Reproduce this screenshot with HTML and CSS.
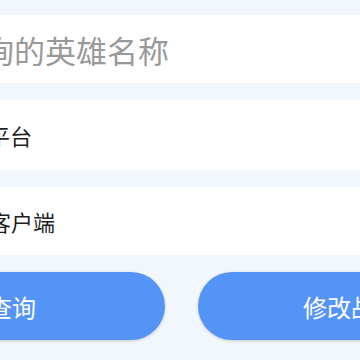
FILE: index.html
```html
<!DOCTYPE html>
<html lang="zh">
<head>
<meta charset="utf-8">
<link rel="stylesheet" href="styles.css">
</head>
<body>
<div class="page">
  <div class="field search">
    <span class="placeholder">查询的英雄名称</span>
  </div>
  <div class="field picker tall">
    <span class="label label-a">平台</span>
  </div>
  <div class="field picker">
    <span class="label label-b">客户端</span>
  </div>
  <div class="actions">
    <button class="btn">查询</button>
    <button class="btn">修改战绩</button>
  </div>
</div>
</body>
</html>
```
FILE: styles.css
```css
html, body {
  margin: 0;
  padding: 0;
  background: #f2f6fd;
}
.page {
  width: 360px;
  height: 360px;
  overflow: hidden;
  padding-top: 15px;
  box-sizing: border-box;
  display: flex;
  flex-direction: column;
  gap: 17px;
  font-family: "Noto Sans CJK SC", "Noto Sans", sans-serif;
}
.field {
  height: 68px;
  background: #ffffff;
  display: flex;
  align-items: center;
  overflow: hidden;
  white-space: nowrap;
  flex-shrink: 0;
}
.field.tall {
  height: 70px;
}
.placeholder {
  font-size: 31px;
  color: #999999;
  margin-left: -48px;
}
.label {
  font-size: 22px;
  color: #1f1f1f;
}
.label-a {
  margin-left: -12px;
}
.label-b {
  margin-left: -11px;
}
.actions {
  display: flex;
  gap: 33px;
  margin-left: -141px;
  flex-shrink: 0;
}
.btn {
  width: 306px;
  height: 68px;
  flex-shrink: 0;
  border: none;
  border-radius: 34px;
  background: #5594f7;
  color: #ffffff;
  font-family: "Noto Sans CJK SC", "Noto Sans", sans-serif;
  font-size: 24px;
  padding: 0;
  box-shadow: 0 1px 3px rgba(0, 0, 0, 0.18);
}
```
